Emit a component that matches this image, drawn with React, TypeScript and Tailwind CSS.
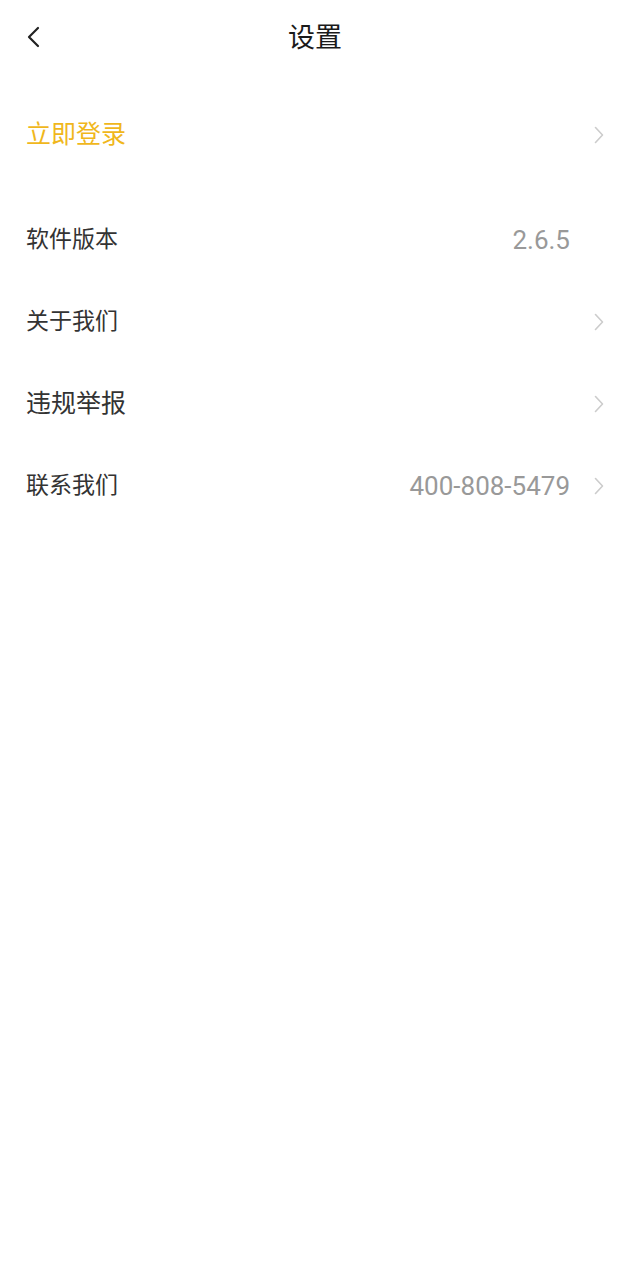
import { type ReactNode } from "react";

const Chevron = ({ hidden = false }: { hidden?: boolean }) => (
  <svg
    width="10"
    height="18"
    viewBox="0 0 10 18"
    className={`ml-[24px] shrink-0 ${hidden ? "invisible" : ""}`}
  >
    <polyline points="1.5,1.5 8.5,9 1.5,16.5" fill="none" stroke="#cccccc" strokeWidth="1.6" strokeLinecap="round" strokeLinejoin="round" />
  </svg>
);

const Row = ({
  label,
  value,
  arrow = true,
  big = false,
}: {
  label: ReactNode;
  value?: string;
  arrow?: boolean;
  big?: boolean;
}) => (
  <div className="flex h-[82px] items-center px-[26px]">
    <span className={`flex-1 text-[#333333] ${big ? "text-[25px]" : "text-[23px]"}`}>{label}</span>
    {value && <span className="text-[26px] text-[#999999]">{value}</span>}
    <Chevron hidden={!arrow} />
  </div>
);

const App = () => {
  return (
    <div
      className="min-h-[1280px] w-full bg-white"
      style={{ fontFamily: 'Roboto, "Noto Sans CJK SC", sans-serif' }}
    >
      <div className="relative flex h-[76px] items-center justify-center">
        <button className="absolute left-[26px] top-[26px]">
          <svg width="14" height="22" viewBox="0 0 14 22">
            <polyline points="12,2 3,11 12,20" fill="none" stroke="#222222" strokeWidth="2.2" strokeLinecap="round" strokeLinejoin="round" />
          </svg>
        </button>
        <h1 className="text-[27px] text-[#1a1a1a]">设置</h1>
      </div>

      <div className="mt-[11px] flex h-[96px] items-center px-[26px]">
        <span className="flex-1 text-[25px] text-[#f0b71c]">立即登录</span>
        <Chevron />
      </div>

      <div className="mt-[16px]">
        <Row label="软件版本" value="2.6.5" arrow={false} />
        <Row label="关于我们" />
        <Row label="违规举报" big />
        <Row label="联系我们" value="400-808-5479" />
      </div>
    </div>
  );
};

export default App;
